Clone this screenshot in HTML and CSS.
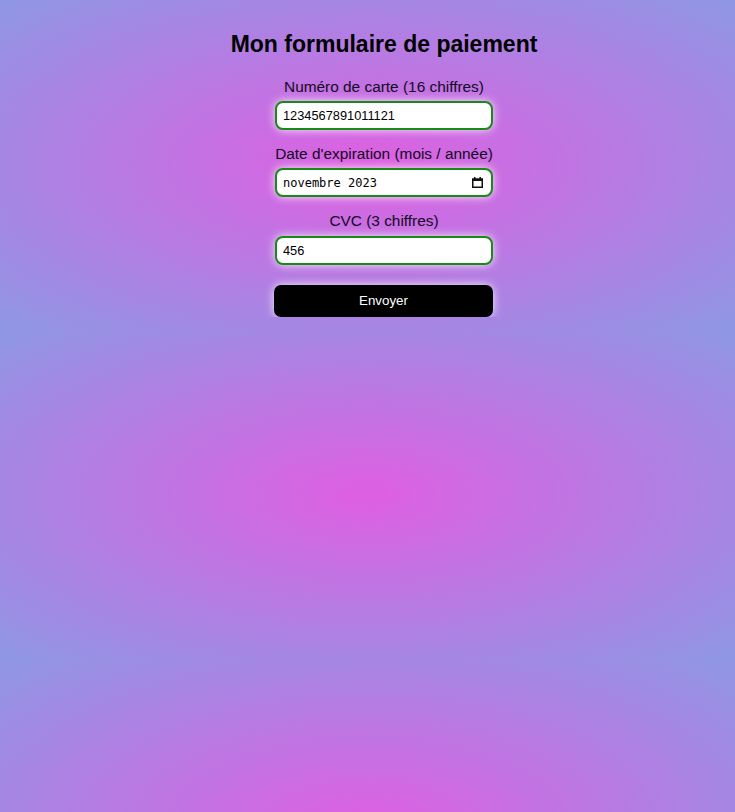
FILE: index.html
```html
<!DOCTYPE html>
<html lang="fr">
<head>
<meta charset="utf-8">
<title>Mon formulaire de paiement</title>
<link rel="stylesheet" href="styles.css">
</head>
<body>
<div class="page">
  <h1 class="title">Mon formulaire de paiement</h1>
  <form class="form">
    <div class="group">
      <label class="label" for="card">Numéro de carte (16 chiffres)</label>
      <input class="field" id="card" type="text" value="1234567891011121">
    </div>
    <div class="group">
      <label class="label" for="exp">Date d'expiration (mois / année)</label>
      <div class="field field-date">
        <input class="date-text" id="exp" type="text" value="novembre 2023">
        <svg class="cal" width="11" height="11" viewBox="0 0 11 11" aria-hidden="true">
          <rect x="0.75" y="2.25" width="9.5" height="8" fill="none" stroke="#111" stroke-width="1.5"/>
          <rect x="0" y="1.5" width="11" height="2.5" fill="#111"/>
          <rect x="2" y="0" width="1.5" height="2" fill="#111"/>
          <rect x="7.5" y="0" width="1.5" height="2" fill="#111"/>
        </svg>
      </div>
    </div>
    <div class="group">
      <label class="label" for="cvc">CVC (3 chiffres)</label>
      <input class="field" id="cvc" type="text" value="456">
    </div>
    <button class="submit" type="button">Envoyer</button>
  </form>
</div>
</body>
</html>
```

FILE: styles.css
```css
html {
  background: radial-gradient(ellipse farthest-corner at center, #df5fe2 0%, #8e97e4 100%);
  background-size: 100% 330px;
  background-repeat: repeat;
}

body {
  margin: 8px;
  font-family: "Liberation Sans", Arial, sans-serif;
  color: #120a24;
}

.page {
  display: flex;
  flex-direction: column;
  align-items: center;
  padding-left: 33px;
}

.title {
  font-size: 23px;
  font-weight: bold;
  line-height: 27.6px;
  margin: 23px 0 0;
  color: #000;
}

.form {
  display: flex;
  flex-direction: column;
  width: 218px;
  margin-top: 19px;
}

.group {
  display: flex;
  flex-direction: column;
  align-items: center;
  margin-bottom: 15px;
}

.label {
  font-size: 15.4px;
  line-height: 18.4px;
  margin-bottom: 5px;
  text-align: center;
  white-space: nowrap;
}

.field {
  box-sizing: border-box;
  width: 218px;
  height: 29px;
  border: 2px solid #178a17;
  border-radius: 8px;
  padding: 0 6px;
  background: #fff;
  box-shadow: 0 0 10px rgba(255, 255, 255, 0.85);
  font-family: "Liberation Sans", Arial, sans-serif;
  font-size: 12.8px;
  color: #000;
  outline: none;
}

.field-date {
  display: flex;
  align-items: center;
  padding: 0 8px 0 6px;
}

.date-text {
  flex: 1;
  min-width: 0;
  border: none;
  padding: 0;
  margin: 0;
  background: transparent;
  font-family: "DejaVu Sans Mono", "Liberation Mono", monospace;
  font-size: 12px;
  color: #000;
  outline: none;
}

.cal {
  flex: none;
  display: block;
}

.submit {
  margin-top: 5px;
  box-sizing: border-box;
  width: 219px;
  height: 32px;
  margin-left: -1px;
  border: none;
  border-radius: 7px;
  background: #000;
  color: #fff;
  font-family: "Liberation Sans", Arial, sans-serif;
  font-size: 13.33px;
  box-shadow: 0 0 10px rgba(255, 255, 255, 0.85);
  cursor: pointer;
}
```
